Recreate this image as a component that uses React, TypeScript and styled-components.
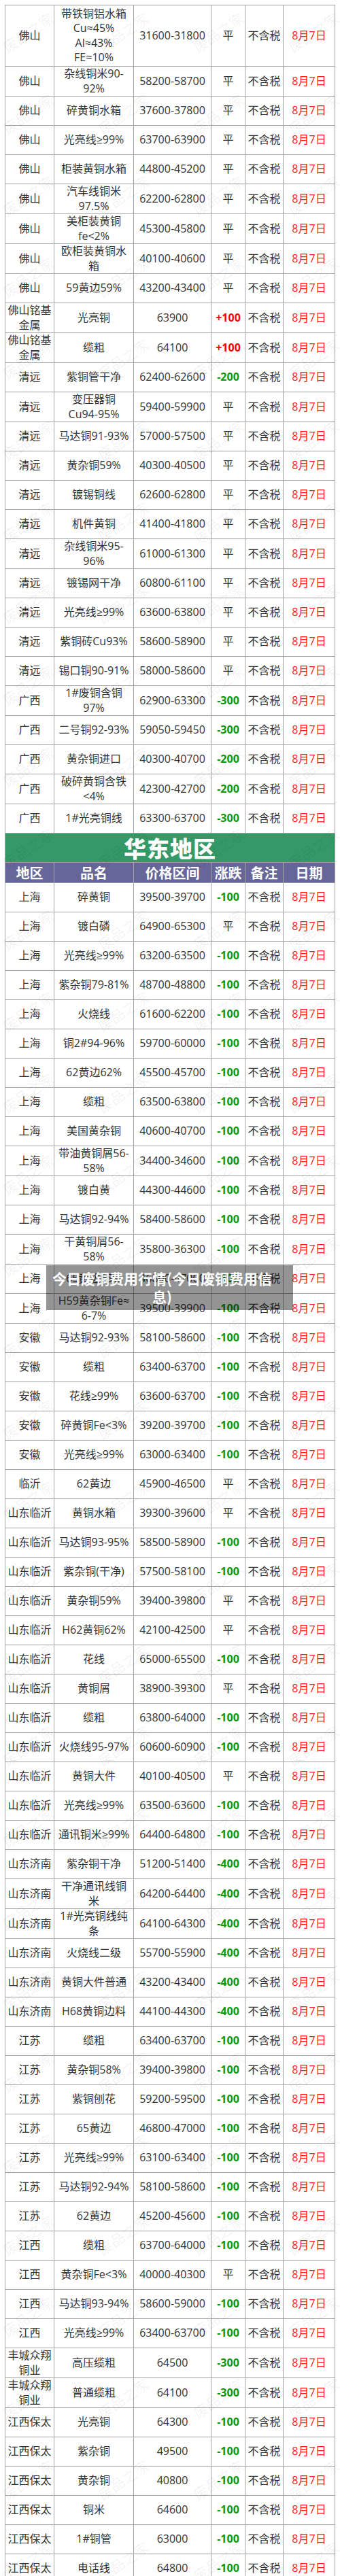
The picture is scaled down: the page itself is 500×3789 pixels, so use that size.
import React from "react";
import styled, { createGlobalStyle } from "styled-components";

const GlobalStyle = createGlobalStyle`
  html, body {
    margin: 0;
    padding: 0;
    background: #fff;
  }
  body {
    font-family: "Open Sans", "Noto Sans CJK SC", sans-serif;
    color: #333;
  }
`;

// area | name | price | change ; "|" inside a string is a line break
type Row = [string, string, string, string, number?];

const south: Row[] = [
  ["佛山", "带铁铜铝水箱|Cu≈45%|Al≈43%|FE≈10%", "31600-31800", "平", 90],
  ["佛山", "杂线铜米90-|92%", "58200-58700", "平"],
  ["佛山", "碎黄铜水箱", "37600-37800", "平"],
  ["佛山", "光亮线≥99%", "63700-63900", "平"],
  ["佛山", "柜装黄铜水箱", "44800-45200", "平"],
  ["佛山", "汽车线铜米|97.5%", "62200-62800", "平"],
  ["佛山", "美柜装黄铜|fe<2%", "45300-45800", "平"],
  ["佛山", "欧柜装黄铜水|箱", "40100-40600", "平"],
  ["佛山", "59黄边59%", "43200-43400", "平"],
  ["佛山铭基|金属", "光亮铜", "63900", "+100"],
  ["佛山铭基|金属", "缆粗", "64100", "+100"],
  ["清远", "紫铜管干净", "62400-62600", "-200"],
  ["清远", "变压器铜|Cu94-95%", "59400-59900", "平"],
  ["清远", "马达铜91-93%", "57000-57500", "平"],
  ["清远", "黄杂铜59%", "40300-40500", "平"],
  ["清远", "镀锡铜线", "62600-62800", "平"],
  ["清远", "机件黄铜", "41400-41800", "平"],
  ["清远", "杂线铜米95-|96%", "61000-61300", "平"],
  ["清远", "镀锡网干净", "60800-61100", "平"],
  ["清远", "光亮线≥99%", "63600-63800", "平"],
  ["清远", "紫铜砖Cu93%", "58600-58900", "平"],
  ["清远", "锡口铜90-91%", "58000-58600", "平"],
  ["广西", "1#废铜含铜|97%", "62900-63300", "-300"],
  ["广西", "二号铜92-93%", "59050-59450", "-300"],
  ["广西", "黄杂铜进口", "40300-40700", "-200"],
  ["广西", "破碎黄铜含铁|<4%", "42300-42700", "-200"],
  ["广西", "1#光亮铜线", "63300-63700", "-300"],
];

const east: Row[] = [
  ["上海", "碎黄铜", "39500-39700", "-100"],
  ["上海", "镀白磷", "64900-65300", "平"],
  ["上海", "光亮线≥99%", "63200-63500", "-100"],
  ["上海", "紫杂铜79-81%", "48700-48800", "-100"],
  ["上海", "火烧线", "61600-62200", "-100"],
  ["上海", "铜2#94-96%", "59700-60000", "-100"],
  ["上海", "62黄边62%", "45500-45700", "-100"],
  ["上海", "缆粗", "63500-63800", "-100"],
  ["上海", "美国黄杂铜", "40600-40700", "-100"],
  ["上海", "带油黄铜屑56-|58%", "34400-34600", "-100"],
  ["上海", "镀白黄", "44300-44600", "-100"],
  ["上海", "马达铜92-94%", "58400-58600", "-100"],
  ["上海", "干黄铜屑56-|58%", "35800-36300", "-100"],
  ["上海", "65黄边65%", "46800-47000", "-100"],
  ["上海", "H59黄杂铜Fe≈|6-7%", "39500-39900", "-100"],
  ["安徽", "马达铜92-93%", "58100-58600", "-100"],
  ["安徽", "缆粗", "63400-63700", "-100"],
  ["安徽", "花线≥99%", "63600-63700", "-100"],
  ["安徽", "碎黄铜Fe<3%", "39200-39700", "-100"],
  ["安徽", "光亮线≥99%", "63000-63400", "-100"],
  ["临沂", "62黄边", "45900-46500", "平"],
  ["山东临沂", "黄铜水箱", "39300-39600", "平"],
  ["山东临沂", "马达铜93-95%", "58500-58900", "-100"],
  ["山东临沂", "紫杂铜(干净)", "57500-58100", "-100"],
  ["山东临沂", "黄杂铜59%", "39400-39800", "平"],
  ["山东临沂", "H62黄铜62%", "42100-42500", "平"],
  ["山东临沂", "花线", "65000-65500", "-100"],
  ["山东临沂", "黄铜屑", "38900-39300", "平"],
  ["山东临沂", "缆粗", "63800-64000", "-100"],
  ["山东临沂", "火烧线95-97%", "60600-60900", "-100"],
  ["山东临沂", "黄铜大件", "40100-40500", "平"],
  ["山东临沂", "光亮线≥99%", "63500-63600", "-100"],
  ["山东临沂", "通讯铜米≥99%", "64400-64800", "-100"],
  ["山东济南", "紫杂铜干净", "51200-51400", "-400"],
  ["山东济南", "干净通讯线铜|米", "64200-64400", "-400"],
  ["山东济南", "1#光亮铜线纯|条", "64100-64300", "-400"],
  ["山东济南", "火烧线二级", "55700-55900", "-400"],
  ["山东济南", "黄铜大件普通", "43200-43400", "-400"],
  ["山东济南", "H68黄铜边料", "44100-44300", "-400"],
  ["江苏", "缆粗", "63400-63700", "-100"],
  ["江苏", "黄杂铜58%", "39400-39800", "-100"],
  ["江苏", "紫铜刨花", "59200-59500", "-100"],
  ["江苏", "65黄边", "46800-47000", "-100"],
  ["江苏", "光亮线≥99%", "63100-63400", "-100"],
  ["江苏", "马达铜92-94%", "58100-58600", "-100"],
  ["江苏", "62黄边", "45200-45600", "-100"],
  ["江西", "缆粗", "63700-64000", "-100"],
  ["江西", "黄杂铜Fe<3%", "40000-40300", "平"],
  ["江西", "马达铜93-94%", "58600-59000", "-100"],
  ["江西", "光亮线≥99%", "63400-63700", "-100"],
  ["丰城众翔|铜业", "高压缆粗", "64500", "-300"],
  ["丰城众翔|铜业", "普通缆粗", "64100", "-300"],
  ["江西保太", "光亮铜", "64300", "-100"],
  ["江西保太", "紫杂铜", "49500", "-100"],
  ["江西保太", "黄杂铜", "40800", "-100"],
  ["江西保太", "铜米", "64600", "-100"],
  ["江西保太", "1#铜管", "63000", "-100"],
  ["江西保太", "电话线", "64800", "-100"],
];

const colWidths = [72, 117, 114, 50, 56, 76];
const headers = ["地区", "品名", "价格区间", "涨跌", "备注", "日期"];

const Page = styled.div`
  position: relative;
  width: 500px;
  height: 3789px;
  box-sizing: border-box;
  padding: 7px;
  overflow: hidden;
`;

const Table = styled.table`
  width: 485px;
  table-layout: fixed;
  border-collapse: collapse;
`;

const Col = styled.col<{ $w: number }>`
  width: ${(p) => p.$w}px;
`;

const Tr = styled.tr<{ $h: number }>`
  height: ${(p) => p.$h}px;
`;

const Td = styled.td`
  border: 1px solid #a3a3a3;
  padding: 0;
  text-align: center;
  vertical-align: middle;
  font-size: 16px;
  line-height: 21.5px;
  white-space: nowrap;
  color: #333;
`;

const Change = styled(Td)<{ $dir: "up" | "down" | "flat" }>`
  font-weight: ${(p) => (p.$dir === "flat" ? 400 : 700)};
  color: ${(p) =>
    p.$dir === "up" ? "#ff0000" : p.$dir === "down" ? "#0b990b" : "#333"};
`;

const DateCell = styled(Td)`
  color: #ff1a1a;
`;

const Banner = styled.td`
  height: 42px;
  padding: 0;
  border: 1px solid #a3a3a3;
  background: #339966;
  color: #fff;
  text-align: center;
  font-family: "Noto Sans CJK SC", sans-serif;
  font-weight: 900;
  font-size: 33px;
  line-height: 42px;
  letter-spacing: 1px;
`;

const Th = styled.th`
  height: 29px;
  padding: 0;
  border: 1px solid #a3a3a3;
  background: #666699;
  color: #fff;
  font-family: "Noto Sans CJK SC", sans-serif;
  font-weight: 700;
  font-size: 20px;
  line-height: 28px;
  white-space: nowrap;
`;

const Marks = styled.div`
  position: absolute;
  inset: 0;
  pointer-events: none;
  overflow: hidden;
`;

const Mark = styled.span`
  position: absolute;
  width: 90px;
  margin-left: -45px;
  margin-top: -12px;
  text-align: center;
  font-family: "Noto Sans CJK SC", sans-serif;
  font-weight: 300;
  font-size: 21px;
  line-height: 24px;
  color: rgba(0, 0, 0, 0.085);
  transform: rotate(-34deg);
  white-space: nowrap;
`;

const Caption = styled.div`
  position: absolute;
  top: 1861px;
  left: 68px;
  width: 363px;
  height: 66px;
  box-sizing: border-box;
  padding: 6px 31px 6px 9px;
  background: rgba(0, 0, 0, 0.42);
  color: #fff;
  font-family: "Noto Sans CJK SC", sans-serif;
  font-weight: 700;
  font-size: 21px;
  line-height: 27px;
  text-align: center;
  white-space: nowrap;
`;

const Lines = ({ text }: { text: string }) => (
  <>
    {text.split("|").map((l, i) => (
      <React.Fragment key={i}>
        {i > 0 && <br />}
        {l}
      </React.Fragment>
    ))}
  </>
);

const dirOf = (c: string) =>
  c.startsWith("+") ? "up" : c.startsWith("-") ? "down" : "flat";

const PriceRow = ({ row }: { row: Row }) => {
  const [area, name, price, change, h] = row;
  return (
    <Tr $h={h ?? 43}>
      <Td>
        <Lines text={area} />
      </Td>
      <Td>
        <Lines text={name} />
      </Td>
      <Td>{price}</Td>
      <Change $dir={dirOf(change)}>{change}</Change>
      <Td>不含税</Td>
      <DateCell>8月7日</DateCell>
    </Tr>
  );
};

export default function App() {
  const marks: { x: number; y: number }[] = [];
  for (let y = 47; y < 3840; y += 120) {
    for (let x = 41; x < 560; x += 140) marks.push({ x, y });
  }

  return (
    <>
      <GlobalStyle />
      <Page>
        <Table>
          <colgroup>
            {colWidths.map((w, i) => (
              <Col key={i} $w={w} />
            ))}
          </colgroup>
          <tbody>
            {south.map((r, i) => (
              <PriceRow key={"s" + i} row={r} />
            ))}
            <tr>
              <Banner colSpan={6}>华东地区</Banner>
            </tr>
            <tr>
              {headers.map((h) => (
                <Th key={h}>{h}</Th>
              ))}
            </tr>
            {east.map((r, i) => (
              <PriceRow key={"e" + i} row={r} />
            ))}
          </tbody>
        </Table>

        <Marks>
          {marks.map((m, i) => (
            <Mark key={i} style={{ left: m.x, top: m.y }}>
              废品之家
            </Mark>
          ))}
        </Marks>

        <Caption>
          今日废铜费用行情(今日废铜费用信
          <br />
          息)
        </Caption>
      </Page>
    </>
  );
}
